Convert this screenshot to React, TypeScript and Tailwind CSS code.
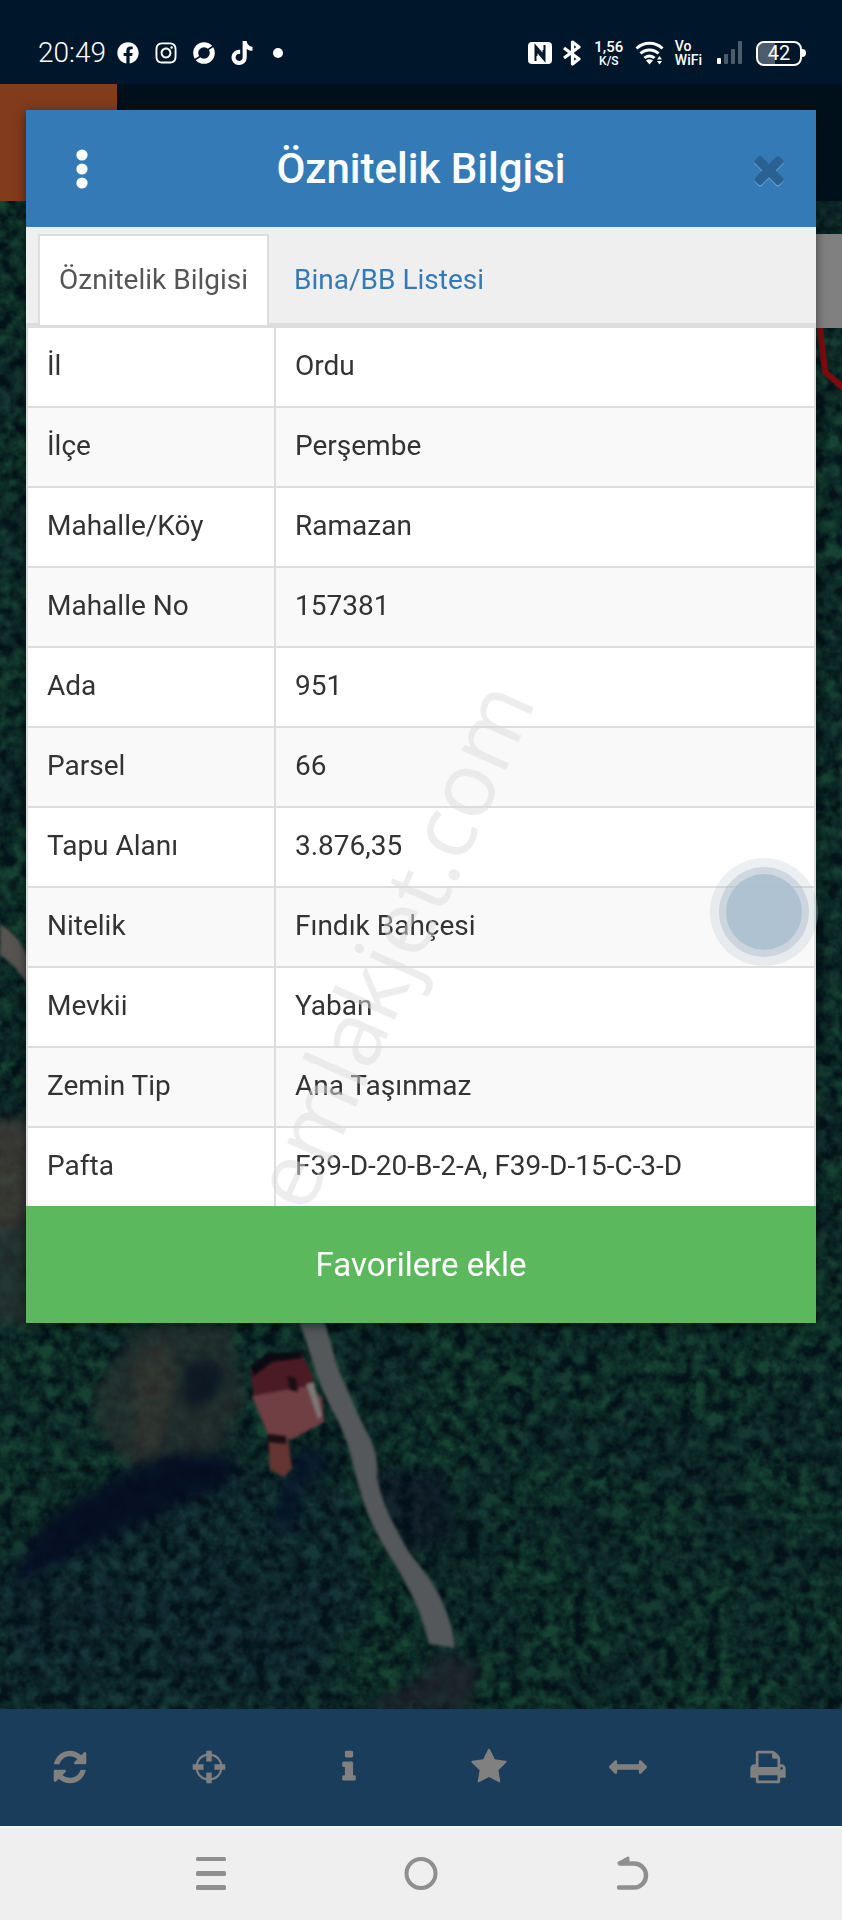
import React from "react";
import { clsx } from "clsx";
import { FaFacebook, FaInstagram, FaTiktok } from "react-icons/fa";

type Row = { label: string; value: string };

const rows: Row[] = [
  { label: "İl", value: "Ordu" },
  { label: "İlçe", value: "Perşembe" },
  { label: "Mahalle/Köy", value: "Ramazan" },
  { label: "Mahalle No", value: "157381" },
  { label: "Ada", value: "951" },
  { label: "Parsel", value: "66" },
  { label: "Tapu Alanı", value: "3.876,35" },
  { label: "Nitelik", value: "Fındık Bahçesi" },
  { label: "Mevkii", value: "Yaban" },
  { label: "Zemin Tip", value: "Ana Taşınmaz" },
  { label: "Pafta", value: "F39-D-20-B-2-A, F39-D-15-C-3-D" },
];

const tools = [
  {
    name: "Yenile",
    d: "M1639 1056q0 5-1 7-64 268-268 434.5t-478 166.5q-146 0-282.5-55t-243.5-157l-129 129q-19 19-45 19t-45-19-19-45v-448q0-26 19-45t45-19h448q26 0 45 19t19 45-19 45l-137 137q71 66 161 102t187 36q134 0 250-65t186-179q11-17 53-117 8-23 30-23h192q13 0 22.5 9.5t9.5 22.5zm25-800v448q0 26-19 45t-45 19h-448q-26 0-45-19t-19-45 19-45l138-138q-148-137-349-137-134 0-250 65t-186 179q-11 17-53 117-8 23-30 23h-199q-13 0-22.5-9.5t-9.5-22.5v-7q65-268 270-434.5t480-166.5q146 0 284 55.5t245 156.5l130-129q19-19 45-19t45 19 19 45z",
  },
  {
    name: "Konum",
    d: "M768 128h256v140a640 640 0 0 1 500 500h140v256h-140a640 640 0 0 1-500 500v140h-256v-140a640 640 0 0 1-500-500h-140v-256h140a640 640 0 0 1 500-500zM768 372a540 540 0 0 0-396 396h268v256h-268a540 540 0 0 0 396 396v-268h256v268a540 540 0 0 0 396-396h-268v-256h268a540 540 0 0 0-396-396v268h-256z",
  },
  {
    name: "Bilgi",
    d: "M1216 1344v128q0 26-19 45t-45 19h-512q-26 0-45-19t-19-45v-128q0-26 19-45t45-19h64v-384h-64q-26 0-45-19t-19-45v-128q0-26 19-45t45-19h384q26 0 45 19t19 45v576h64q26 0 45 19t19 45zm-128-1152v192q0 26-19 45t-45 19h-256q-26 0-45-19t-19-45v-192q0-26 19-45t45-19h256q26 0 45 19t19 45z",
  },
  {
    name: "Favoriler",
    d: "M1728 647q0 22-26 48l-363 354 86 500q1 7 1 20 0 21-10.5 35.5t-30.5 14.5q-19 0-40-12l-449-236-449 236q-22 12-40 12-21 0-31.5-14.5t-10.5-35.5q0-6 2-20l86-500-364-354q-25-27-25-48 0-37 56-46l502-73 225-455q19-41 49-41t49 41l225 455 502 73q56 9 56 46z",
  },
  {
    name: "Ölçüm",
    d: "M1792 896q0 26-19 45l-256 256q-19 19-45 19t-45-19-19-45v-128h-1024v128q0 26-19 45t-45 19-45-19l-256-256q-19-19-19-45t19-45l256-256q19-19 45-19t45 19 19 45v128h1024v-128q0-26 19-45t45-19 45 19l256 256q19 19 19 45z",
  },
  {
    name: "Yazdır",
    d: "M448 1536h896v-256h-896v256zm0-640h896v-384h-160q-40 0-68-28t-28-68v-160h-640v640zm1152 64q0-26-19-45t-45-19-45 19-19 45 19 45 45 19 45-19 19-45zm128 0v416q0 13-9.5 22.5t-22.5 9.5h-224v160q0 40-28 68t-68 28h-960q-40 0-68-28t-28-68v-160h-224q-13 0-22.5-9.5t-9.5-22.5v-416q0-79 56.5-135.5t135.5-56.5h64v-544q0-40 28-68t68-28h672q40 0 88 20t76 48l152 152q28 28 48 76t20 88v256h64q79 0 135.5 56.5t56.5 135.5z",
  },
];

const closePath =
  "M1490 1322q0 40-28 68l-136 136q-28 28-68 28t-68-28l-294-294-294 294q-28 28-68 28t-68-28l-136-136q-28-28-28-68t28-68l294-294-294-294q-28-28-28-68t28-68l136-136q28-28 68-28t68 28l294 294 294-294q28-28 68-28t68 28l136 136q28 28 28 68t-28 68l-294 294 294 294q28 28 28 68z";

const StatusBar: React.FC = () => (
  <div className="flex h-[84px] items-center justify-between bg-[#00172b] pt-[22px] pr-9 pl-[38px] text-white">
    <div className="flex items-center gap-[15px]">
      <span className="-mr-1 text-[28px] leading-8 font-light">20:49</span>
      <FaFacebook size={22} />
      <FaInstagram size={24} />
      <svg width="22" height="22" viewBox="0 0 22 22" fill="none">
        <circle cx="11" cy="11" r="8.300" stroke="currentColor" strokeWidth="5" />
        <path d="M13.500 8.500l7-4.500M1.500 18l7-4.500" stroke="#00172b" strokeWidth="1.500" />
      </svg>
      <FaTiktok size={24} />
      <span className="ml-1 size-2.5 rounded-full bg-white" />
    </div>
    <div className="flex items-center gap-2.5">
      <svg width="24" height="22" viewBox="0 0 24 22">
        <rect width="24" height="22" rx="4" fill="#fff" />
        <path d="M7.500 19V4l8 9.500V8M16.500 3v15l-8-9.500V14" fill="none" stroke="#00172b" strokeWidth="2" />
      </svg>
      <svg width="21" height="26" viewBox="0 0 21 26" fill="none" stroke="currentColor" strokeWidth="3.2">
        <path d="M2 8l15 11-6.500 5V2L17 7 2 18" strokeLinejoin="round" />
      </svg>
      <span className="flex w-8 flex-col items-center font-medium">
        <span className="text-[15px] leading-4">1,56</span>
        <span className="text-xs leading-3">K/S</span>
      </span>
      <svg width="30" height="26" viewBox="0 0 30 26" fill="none" stroke="currentColor" strokeWidth="3">
        <path d="M1.500 8.500a19 19 0 0 1 26 0M5.500 13.500a13 13 0 0 1 18 0M9.500 18a7 7 0 0 1 10 0" />
        <path d="M11 20.500q3.500-2.500 7 0l-3.500 4z" fill="currentColor" stroke="none" />
        <path d="M22 19.500l2.500-3.500 2.500 3.500zM22 21l2.500 3.500L27 21z" fill="currentColor" stroke="none" />
      </svg>
      <span className="flex flex-col text-sm leading-[14px] font-medium">
        <span>Vo</span>
        <span>WiFi</span>
      </span>
      <svg width="34" height="26" viewBox="0 0 34 26">
        <rect x="5" y="18" width="4" height="6" rx="1" fill="#fff" />
        <g fill="#4d5c6b">
          <rect x="12" y="14" width="4" height="10" rx="1" />
          <rect x="19" y="9" width="4" height="15" rx="1" />
          <rect x="26" y="1" width="4" height="23" rx="1" />
        </g>
      </svg>
      <span className="flex items-center">
        <span className="flex h-[25px] w-[46px] items-center justify-center rounded-lg border-2 border-white bg-linear-to-r from-[#4d5c6b] from-40% to-[#00172b] to-40% bg-clip-padding text-xl leading-5">
          42
        </span>
        <span className="h-2 w-1 rounded-r-sm bg-white" />
      </span>
    </div>
  </div>
);

// Aerial view behind the dialog, already dimmed by the backdrop
const AerialMap: React.FC = () => (
  <svg
    className="absolute inset-0 size-full"
    viewBox="0 84 842 1625"
    preserveAspectRatio="xMidYMid slice"
    aria-hidden="true"
  >
    <defs>
      <filter id="canopy" x="0" y="0" width="100%" height="100%" colorInterpolationFilters="sRGB">
        <feTurbulence type="fractalNoise" baseFrequency="0.075" numOctaves="3" seed="7" />
        <feColorMatrix
          values="0 0 0 0 0.01
                  0 0 0 0 0.06
                  0 0 0 0 0.09
                  1.8 1.2 0 0 -1"
        />
      </filter>
      <filter id="patches" x="0" y="0" width="100%" height="100%" colorInterpolationFilters="sRGB">
        <feTurbulence type="fractalNoise" baseFrequency="0.012" numOctaves="2" seed="11" />
        <feColorMatrix
          values="0 0 0 0 0.08
                  0 0 0 0 0.17
                  0 0 0 0 0.19
                  3 0 0 0 -1.2"
        />
      </filter>
      <filter id="soft" colorInterpolationFilters="sRGB">
        <feGaussianBlur stdDeviation="6" />
      </filter>
      <filter id="edge" colorInterpolationFilters="sRGB">
        <feGaussianBlur stdDeviation="1.5" />
      </filter>
    </defs>
    <rect y="84" width="842" height="1625" fill="#174333" />
    <rect y="84" width="842" height="1625" filter="url(#patches)" opacity="0.6" />
    <g filter="url(#soft)">
      <path d="M0 1560l110-70 130-20 110 20 20 120-80 99H0z" fill="#17323a" opacity="0.7" />
      <path d="M365 1470h80l10 70-50 10z" fill="#15242e" />
    </g>
    <rect y="84" width="842" height="1625" filter="url(#canopy)" opacity="0.9" />
    <g filter="url(#soft)" opacity="0.7">
      <path d="M95 1390l45-66h90l14 76-24 52-90 16-34-40z" fill="#2a3130" />
      <path d="M135 1360l30-20 10 40-16 70-24 8z" fill="#3d3833" />
      <path d="M-10 1120h50v95l-50 20z" fill="#4a403b" />
      <path d="M-10 1235l50-20v110h-50z" fill="#2c3733" />
      <path d="M360 1709l60-30 20-25 40 10-10 45z" fill="#22242c" />
    </g>
    <g filter="url(#soft)">
      <path d="M172 1454l62 2-4 26-60 26-70 34-88 44 34-66 70-44z" fill="#050d22" opacity="0.9" />
      <path d="M292 1452l34-4v20l-24 20-8 44h-22z" fill="#06122a" opacity="0.7" />
      <path d="M186 1362h34l6 20-24 26-20-6z" fill="#06101f" opacity="0.7" />
    </g>
    <g filter="url(#edge)">
      <path d="M0 925q16 6 28 32v28q-12-20-28-30z" fill="#575351" />
      <path
        d="M298 1318q10 28 17 52 6 18 16 38 14 24 20 48 6 28 16 56 10 24 24 46 14 22 24 44 8 18 14 42l26 4q-2-20-10-40-8-20-22-38-16-18-26-40-14-24-20-52 2-20-6-38-12-22-20-42-8-18-14-32-6-24-14-50z"
        fill="#54585a"
      />
      <path d="M250 1366l18-10 34-2 12 24-6 12-54 8z" fill="#4b1b25" />
      <path d="M252 1396l56-10 14 12 2 24-32 17-24-4z" fill="#703f44" />
      <path d="M306 1384l8-2 8 34-4 3z" fill="#7d7876" />
      <path d="M268 1434l20 4 4 30-8 9-14-8z" fill="#653533" />
      <path d="M250 1366l18-13 32-1 2 6-30 4-18 14z" fill="#0b0a12" />
      <path d="M287 1376l9 2 2 14-8-2zM268 1434l18 2v8l-18-2z" fill="#1c0d15" />
    </g>
    <path d="M819 320l6 52 20 17" fill="none" stroke="#7c0c10" strokeWidth="6" />
  </svg>
);

const Tabs: React.FC = () => (
  <nav className="flex gap-1 border-b-2 border-[#ddd] bg-[#efefef] pt-[7px] pl-3 text-[28px] leading-9">
    <a
      href="#oznitelik"
      aria-current="page"
      className="-mb-0.5 flex h-[91px] items-center border-2 border-b-0 border-[#ddd] bg-white px-[19px] pb-0.5 text-[#555]"
    >
      Öznitelik Bilgisi
    </a>
    <a
      href="#bina"
      className="-mb-0.5 flex h-[91px] items-center border-2 border-b-0 border-transparent px-[19px] pb-0.5 text-[#337ab7]"
    >
      Bina/BB Listesi
    </a>
  </nav>
);

const AttributeTable: React.FC = () => (
  <table className="w-full border-separate border-spacing-0 border-x-2 border-t-[3px] border-[#ddd] text-left text-[28px] leading-9 text-[#333]">
    <tbody>
      {rows.map(({ label, value }, i) => (
        <tr key={label} className={clsx("group h-20 last:h-[78px]", i % 2 ? "bg-[#f9f9f9]" : "bg-white")}>
          <th
            scope="row"
            className="w-[248px] border-r-2 border-b-2 border-[#ddd] pb-0.5 pl-[19px] font-normal group-last:border-b-0"
          >
            {label}
          </th>
          <td className="border-b-2 border-[#ddd] pb-0.5 pl-[19px] group-last:border-b-0">{value}</td>
        </tr>
      ))}
    </tbody>
  </table>
);

const Dialog: React.FC = () => (
  <section
    role="dialog"
    aria-label="Öznitelik Bilgisi"
    className="relative mx-[26px] mt-[26px] mb-16 self-start bg-white shadow-[0_3px_10px_rgba(0,0,0,0.5)] [grid-area:1/1]"
  >
    <header className="flex h-[117px] items-center justify-between bg-[#337ab7] px-[25px] text-white">
      <button type="button" aria-label="Menü" className="flex size-[62px] items-center justify-center">
        <svg width="12" height="40" viewBox="0 0 12 40" fill="currentColor">
          <circle cx="6" cy="6" r="5.600" />
          <circle cx="6" cy="20" r="5.600" />
          <circle cx="6" cy="34" r="5.600" />
        </svg>
      </button>
      <h1 className="text-[42px] leading-[48px] font-medium">Öznitelik Bilgisi</h1>
      <button type="button" aria-label="Kapat" className="flex size-[62px] items-center justify-end">
        <svg width="44" height="44" viewBox="0 0 1792 1792">
          <path d={closePath} fill="#6ea1d0" transform="translate(0 50)" />
          <path d={closePath} fill="#296292" />
        </svg>
      </button>
    </header>
    <Tabs />
    <AttributeTable />
    <button type="button" className="h-[117px] w-full bg-[#5cb85c] text-[33px] leading-10 text-white">
      Favorilere ekle
    </button>

    <span className="pointer-events-none absolute top-[834px] left-[364px] -translate-x-1/2 -translate-y-1/2">
      <span className="block -rotate-66 font-['Open_Sans',sans-serif] text-[90px] leading-[90px] text-[#dcdcdc]/50">
        emlakjet.com
      </span>
    </span>

    {/* assistive touch ball */}
    <button
      type="button"
      aria-label="Yardımcı top"
      className="absolute top-[748px] -right-0.5 flex size-[108px] items-center justify-center rounded-full bg-[#b4c3cf]/25"
    >
      <span className="flex size-[90px] items-center justify-center rounded-full bg-[#a2b4c3]/40">
        <span className="size-[76px] rounded-full bg-[#acc0d0]/90" />
      </span>
    </button>
  </section>
);

const Toolbar: React.FC = () => (
  <div className="grid h-[117px] grid-cols-6 bg-[#1a3d5c] pr-1 pb-0.5 text-[#808080]">
    {tools.map(({ name, d }) => (
      <button key={name} type="button" aria-label={name} className="flex items-center justify-center">
        <svg width="38" height="38" viewBox="0 0 1792 1792" fill="currentColor">
          <path d={d} fillRule="evenodd" />
        </svg>
      </button>
    ))}
  </div>
);

const NavBar: React.FC = () => (
  <div className="grid h-[94px] grid-cols-3 border-t-2 border-[#f6f6f6] bg-[#efefef] px-[12.5%] text-[#8f8f8f]">
    <button type="button" aria-label="Son uygulamalar" className="flex items-center justify-center">
      <svg width="36" height="36" viewBox="0 0 36 36" fill="currentColor">
        <rect x="3" y="1" width="30" height="4" rx="1.500" />
        <rect x="3" y="15" width="30" height="5" rx="1.500" />
        <rect x="3" y="29" width="30" height="5" rx="1.500" />
      </svg>
    </button>
    <button type="button" aria-label="Ana ekran" className="flex items-center justify-center">
      <svg width="36" height="36" viewBox="0 0 36 36" fill="none" stroke="currentColor" strokeWidth="4">
        <circle cx="18" cy="17.500" r="14.500" />
      </svg>
    </button>
    <button type="button" aria-label="Geri" className="flex items-center justify-center">
      <svg width="36" height="36" viewBox="0 0 36 36" fill="none" stroke="currentColor" strokeLinecap="round">
        <path d="M5 31.500h15a12 12 0 0 0 0-24H6" strokeWidth="4.500" />
        <path d="M5 7l9-5v5z" fill="currentColor" strokeWidth="3" strokeLinejoin="round" />
      </svg>
    </button>
  </div>
);

const App: React.FC = () => {
  return (
    <div className="flex min-h-screen flex-col overflow-hidden bg-[#00172b] font-[Roboto,sans-serif]">
      <StatusBar />
      <main className="grid flex-1 overflow-hidden">
        <div className="relative [grid-area:1/1]">
          <AerialMap />
          <div className="relative flex h-[117px] bg-[#00101a]">
            <div className="w-[117px] bg-[#823b1c]" />
          </div>
          <div className="relative mt-[33px] ml-auto h-[94px] w-20 bg-[#808080]" />
        </div>
        <Dialog />
      </main>
      <Toolbar />
      <NavBar />
    </div>
  );
};

export default App;
